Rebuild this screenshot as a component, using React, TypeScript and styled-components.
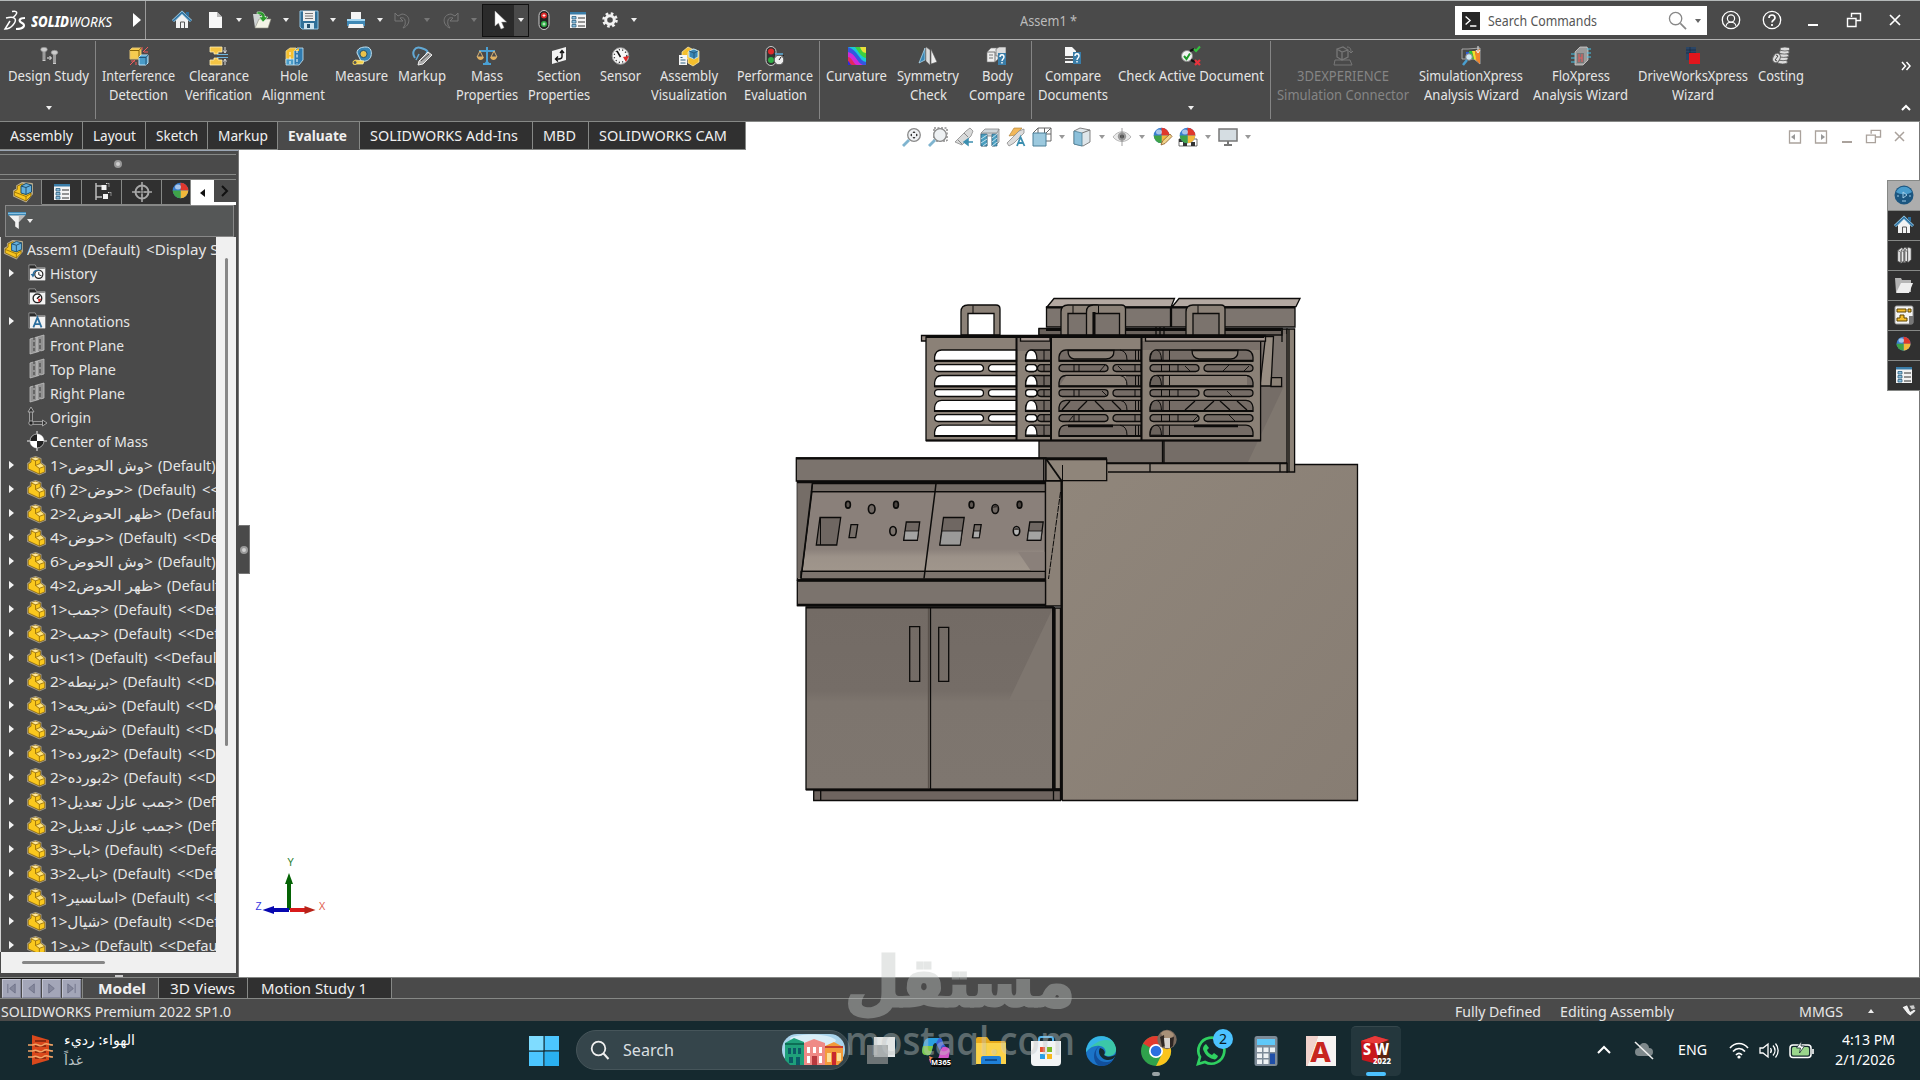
import React, { useLayoutEffect, useRef } from "react";
import styled, { createGlobalStyle } from "styled-components";

const C = {
  bar: "#4a4a4a",
  dark: "#303030",
  line: "#868886",
  text: "#e6e6e6",
  task: "#15292f",
};
const UI = `"Noto Sans", "Open Sans", "DejaVu Sans", sans-serif`;

const Global = createGlobalStyle`
  * { box-sizing: border-box; }
  body { margin: 0; background: #fff; font-family: ${UI}; overflow: hidden; }
  svg { display: block; flex: none; overflow: visible; }
`;

/* ---------- text fitted to a column width ---------- */
const FitBox = styled.span<{ $w: number }>`
  display: inline-block;
  flex: none;
  width: ${(p) => p.$w}px;
  white-space: pre;
  text-align: left;
`;
const FitInner = styled.span`
  display: inline-block;
  transform-origin: 0 50%;
`;
const Fit = ({ w, t }: { w: number; t: string }) => {
  const ref = useRef<HTMLSpanElement>(null);
  useLayoutEffect(() => {
    const el = ref.current!;
    el.style.transform = "none";
    const n = el.getBoundingClientRect().width;
    el.style.transform = `scaleX(${w / n})`;
  }, [w, t]);
  return (
    <FitBox $w={w}>
      <FitInner ref={ref}>{t}</FitInner>
    </FitBox>
  );
};

/* ---------- icons ---------- */
const Svg = ({ s = 20, vb = 20, children }: any) => (
  <svg width={s} height={s} viewBox={`0 0 ${vb} ${vb}`} fill="none">
    {children}
  </svg>
);
const Down = ({ c = "#eee", up = false }: any) => (
  <svg width="6" height="4" viewBox="0 0 6 4">
    <path d={up ? "M0 4h6L3 0z" : "M0 0h6L3 4z"} fill={c} />
  </svg>
);
const Home = () => (
  <Svg>
    <path d="M4 10v8h12v-8l-6-6z" fill="#f2f2f2" />
    <path d="M8.500 18v-6h4v6" stroke="#555" />
    <path d="M1 11l9-8.500L19 11" stroke="#9fd3ef" strokeWidth="3" />
    <path d="M1 11l9-8.500L19 11" stroke="#2d6f9e" strokeWidth="1.600" />
    <path d="M14 2h3v5l-3-3z" fill="#2d6f9e" />
  </Svg>
);
const NewDoc = () => (
  <Svg>
    <path d="M4 2h8l5 5v11H4z" fill="#f7f7f7" />
    <path d="M12 2v5h5z" fill="#b9b9b9" />
  </Svg>
);
const Open = () => (
  <Svg>
    <path d="M1 4h6l1 2h6v12H3z" fill="#cfd3d3" />
    <path d="M3 18l4-9h12l-3 9z" fill="#f3f3e6" stroke="#8d8d80" strokeWidth=".6" />
    <path d="M5 2c5-1 8 1 8 5h3l-5 5-4-5h3c0-2-2-3-5-3z" fill="#2c9a2c" stroke="#e6ffe6" strokeWidth=".5" />
  </Svg>
);
const Save = () => (
  <Svg>
    <path d="M1 1h18v18H3l-2-2z" fill="#2f6f98" stroke="#8ec4e4" />
    <path d="M4 1h12v10H4z" fill="#eee" />
    <path d="M6 3.500h8M6 6h8M6 8.500h8" stroke="#777" />
    <path d="M5 13h10v6H5z" fill="#cfe4f0" />
    <path d="M8 14h3v4H8z" fill="#24506e" />
  </Svg>
);
const Print = () => (
  <Svg>
    <path d="M5 2h10v7H5z" fill="#f4f4f4" />
    <path d="M1 9h18v7H1z" fill="#3f88b5" />
    <path d="M1 9h18v2H1z" fill="#a6d6f0" />
    <path d="M3 14h14l1 4H2z" fill="#f4f4f4" />
  </Svg>
);
const Undo = () => (
  <Svg>
    <path d="M2 3v8h8L7 8c4-1 6 1 5 7l-2 3c7-2 9-13-1-14L5 6z" stroke="#777" />
  </Svg>
);
const Redo = () => (
  <Svg>
    <path d="M18 3v8h-8l3-3c-4-1-6 1-5 7l2 3C3 16 1 5 11 4l4 2z" stroke="#777" />
  </Svg>
);
const Cursor = () => (
  <Svg>
    <path d="M6 1v15l3.500-3 2.500 6 3-1.300-2.500-5.700h5z" fill="#fff" stroke="#aaa" strokeWidth=".5" />
  </Svg>
);
const Traffic = () => (
  <Svg>
    <rect x="5" y="0.500" width="10" height="19" rx="5" fill="#222" stroke="#ccc" />
    <circle cx="10" cy="5.500" r="3" fill="#e02a2a" />
    <circle cx="10" cy="14" r="3" fill="#2fae45" />
    <path d="M8.500 5.500h3M8.500 14h3M10 4v3M10 12.500v3" stroke="#fff" strokeWidth=".8" />
  </Svg>
);
const ListIco = () => (
  <Svg>
    <path d="M2 2h16v16H2z" fill="#f4f4f4" />
    <path d="M2 2h16v2.500H2z" fill="#3a7da8" />
    <path d="M4 6.500h4v2.500H4zM4 10.500h4V13H4zM4 14.500h4V17H4z" fill="#8cc0de" stroke="#2d6080" strokeWidth=".8" />
    <path d="M10 8h7M10 12h7M10 16h7" stroke="#333" strokeWidth="1.200" />
  </Svg>
);
const Gear = () => (
  <Svg>
    <circle cx="10" cy="10" r="6.500" stroke="#f2f2f2" strokeWidth="2.500" strokeDasharray="2.600 2.500" />
    <circle cx="10" cy="10" r="4.300" stroke="#f2f2f2" strokeWidth="3" />
  </Svg>
);
const Bolt = ({ x, h }: any) => (
  <g transform={`translate(${x} ${h})`}>
    <ellipse cx="3.500" cy="2.500" rx="3.300" ry="2.200" fill="#ccc" stroke="#888" strokeWidth=".6" />
    <path d="M2 4.500h3V14H2z" fill="#ccc" />
    <path d="M1.500 6h4M1.500 8h4M1.500 10h4M1.500 12h4" stroke="#555" strokeWidth=".8" />
  </g>
);
const Study = () => (
  <Svg>
    <Bolt x={1.5} h={1} />
    <Bolt x={12} h={4} />
    <path d="M8 12h4M10.500 10l2 2-2 2" stroke="#eee" />
  </Svg>
);
const Interf = () => (
  <Svg>
    <path d="M1 4l2-2h9v9l-2 2H1z" fill="#f6cc50" stroke="#e0c070" />
    <path d="M1 4.500h9V13M10 4.500l2-2.500" stroke="#7d5a00" strokeWidth=".9" />
    <path d="M10 11l2-2h7v8l-2 2h-7z" fill="#4a9cc8" stroke="#bfe4f7" />
    <path d="M10 11.500h7V19M17 11.500L19 9" stroke="#1f4f70" strokeWidth=".9" />
    <path d="M14 6l5-5M13 4V1M19 6h-4M1 19l5-5M2 15h4M7 19v-3" stroke="#f05a5a" />
  </Svg>
);
const Clear = () => (
  <Svg>
    <path d="M1 1h12v5H9v2H5V6H1zM1 19h12v-5H9v-2H5v2H1z" fill="#f5c545" stroke="#fff0b8" strokeWidth=".8" />
    <path d="M8 8.500h11M8 11.500h11" stroke="#6fb4dd" />
    <path d="M16 1v5M14.500 4.500L16 7l1.500-2.500M16 19v-5M14.500 15.500L16 13l1.500 2.500" stroke="#ddd" />
  </Svg>
);
const Hole = () => (
  <Svg>
    <path d="M2 5l4-3h6v15H2z" fill="#f5bf2d" stroke="#e8d9a0" strokeWidth=".8" />
    <path d="M2 13h8v6H2z" fill="#4a9cc8" stroke="#c9e8f8" strokeWidth=".8" />
    <path d="M10 5l3-3h6v12l-4 5h-5z" fill="#2f7bb0" stroke="#c9e8f8" strokeWidth=".8" />
    <path d="M10 5h5V2" fill="#f5bf2d" />
    <path d="M6 6v13M13 4v14" stroke="#fff" strokeDasharray="3 1.500" />
  </Svg>
);
const Measure = () => (
  <Svg>
    <path d="M5 7c0-5 5-6 9-6 5 0 6 5 5 9s-5 6-10 5z" fill="#3a86b4" stroke="#c2e2f2" />
    <circle cx="11.500" cy="8" r="3.600" fill="#e9c24a" stroke="#23516e" />
    <path d="M1 18l2-4 9 1-1 3z" fill="#f5d04a" stroke="#fff3b8" strokeWidth=".7" />
    <circle cx="3" cy="16.500" r="2" fill="#555" stroke="#f5d04a" />
  </Svg>
);
const MarkupI = () => (
  <Svg>
    <path d="M3 12C-1 6 3 0 9 2s8 3 5 6" stroke="#62a9d5" strokeWidth="2" />
    <path d="M4 14l3-6" stroke="#62a9d5" strokeWidth="1.500" />
    <path d="M7 15L16 6l4 3-9 9-5 1z" fill="#aaa" stroke="#eee" />
    <path d="M9 15l8-7" stroke="#444" />
  </Svg>
);
const Mass = () => (
  <Svg>
    <path d="M10 1v16M2 5h16M6 18h8" stroke="#4aa0d4" strokeWidth="2" />
    <path d="M0 11l3-6 3 6zM14 11l3-6 3 6z" stroke="#e9c07a" strokeWidth=".9" />
    <path d="M0 11h7c-1 4-6 4-7 0zM13 11h7c-1 4-6 4-7 0z" fill="#e0b060" />
    <path d="M7 18h6l-3-4z" fill="#4aa0d4" />
  </Svg>
);
const Section = () => (
  <Svg>
    <path d="M3 5l14-4v13L3 18z" fill="#f3f3f3" />
    <path d="M13 5v6c0 2-2 2-6 2M9 10.500L6.500 13 9 15.500M11 7l2-2.500L15 7" stroke="#111" strokeWidth="1.400" />
  </Svg>
);
const Sensor = () => (
  <Svg>
    <circle cx="9.500" cy="10" r="8.300" fill="#f6f6f6" stroke="#999" />
    <circle cx="9.500" cy="10" r="6.300" stroke="#333" strokeDasharray="1.200 2.200" strokeWidth="1.300" />
    <path d="M9.500 11L6 5" stroke="#111" strokeWidth="1.500" />
    <path d="M12 11l6-1-3 6z" fill="#e02a2a" />
  </Svg>
);
const AsmVis = () => (
  <Svg>
    <path d="M3 6l6-5 6 3v9H3z" fill="#f5bf2d" stroke="#fff0b8" strokeWidth=".7" />
    <path d="M9 6l5-3 6 2v11l-6 4-5-3z" fill="#f5bf2d" stroke="#fff0b8" strokeWidth=".7" />
    <path d="M10 5l5-2 4 2v6l-4 2-5-2z" fill="#3a86b4" stroke="#bfe4f7" />
    <path d="M10 5l5 2 4-2M15 7v6" stroke="#1f4f70" strokeWidth=".8" />
    <path d="M0 9h8v10H0z" fill="#f6f6f6" />
    <path d="M1.500 11.500h2M1.500 14h5M1.500 17h5" stroke="#2d6080" />
  </Svg>
);
const Perf = () => (
  <Svg>
    <rect x="1" y="0.500" width="10" height="19" rx="5" fill="#333" stroke="#ccc" />
    <circle cx="6" cy="5.500" r="3" fill="#e02a2a" />
    <circle cx="6" cy="14" r="3" fill="#2fae45" />
    <circle cx="14" cy="14" r="4.800" fill="#eee" stroke="#555" />
    <path d="M14 14l2-3M9 9l3-1M17 8l2 2" stroke="#222" />
    <path d="M10 8h8" stroke="#5fb1de" strokeWidth="1.500" />
  </Svg>
);
const Curv = () => (
  <Svg>
    <path d="M1 1h18v18H1z" fill="#19c7d8" />
    <path d="M8 1h11v11C14 11 11 5 8 1z" fill="#3fcf3f" />
    <path d="M13 1h6v6c-3 0-5-3-6-6z" fill="#e9e13a" />
    <path d="M1 1v18h18v-3C12 15 11 4 1 1z" fill="#3357e0" />
    <path d="M1 6v13h15C10 17 9 8 1 6z" fill="#d02ad8" />
    <path d="M1 11v8h9c-4-1-4-7-9-8z" fill="#e02a5a" />
    <path d="M1 15v4h4c-2 0-2-3-4-4z" fill="#2b2be0" />
  </Svg>
);
const Symm = () => (
  <Svg>
    <path d="M1 17L7 2v12z" fill="#3a86b4" stroke="#bfe4f7" strokeWidth=".7" />
    <path d="M8 1l4 3v15l-4-4z" fill="#ddd" stroke="#777" strokeWidth=".5" />
    <path d="M13 3l6 13-6 2z" fill="#eee" stroke="#555" strokeWidth=".6" />
  </Svg>
);
const Q = ({ x = 11, y = 7 }: any) => (
  <g transform={`translate(${x} ${y})`}>
    <path d="M0 0h8v12H0z" fill="#3a7da8" />
    <path d="M2 4c0-3 4-3 4 0 0 2-2 2-2 4M4 9v1.500" stroke="#fff" strokeWidth="1.400" />
  </g>
);
const Body = () => (
  <Svg>
    <path d="M0 6l4-4h7v11l-3 3H0z" fill="#eee" stroke="#777" strokeWidth=".6" />
    <path d="M9 3l3-2h7v9H9z" fill="#ddd" stroke="#555" strokeWidth=".6" />
    <path d="M0 6h8v10M2 9h4M2 12h4" stroke="#555" strokeWidth=".8" />
    <Q />
  </Svg>
);
const CompDoc = () => (
  <Svg>
    <path d="M2 1h7l4 4v12H2z" fill="#f6f6f6" />
    <path d="M2 11h9M2 14h9" stroke="#222" strokeWidth="1.500" />
    <Q x={10} y={6} />
  </Svg>
);
const CheckI = () => (
  <Svg>
    <circle cx="6" cy="10" r="5.500" fill="#f2f2f2" stroke="#888" />
    <path d="M3 10l2.500 3L9 7.500" stroke="#1f9a2a" strokeWidth="2" />
    <path d="M9 5l4-2M10 14l4 2" stroke="#111" strokeWidth="2" />
    <path d="M13 3l2 2 4-4.500" stroke="#35c23f" strokeWidth="2" />
    <path d="M14 14l5 5M19 14l-5 5" stroke="#e8323c" strokeWidth="2.200" />
  </Svg>
);
const Exp3d = () => (
  <Svg>
    <path d="M2 14h15l2 5H1z" stroke="#777" />
    <path d="M4 3l6-2 5 3v7l-6 3-5-3zM9 6v8M4 3l5 3 6-2" stroke="#777" strokeWidth="1.300" />
    <path d="M14 1c4 0 4 3 4 6l2-2M18 7l-2-2" stroke="#777" />
  </Svg>
);
const SimX = () => (
  <Svg>
    <path d="M1 3h6l12-1v16l-6-5H1z" fill="#4a4a4a" stroke="#ccc" strokeWidth=".7" />
    <path d="M5 6h4v8H5z" fill="#2c5ee0" />
    <path d="M8 5h3l2 8h-4z" fill="#2cc53c" />
    <path d="M11 5h3l2 10-3-2z" fill="#f2e02c" />
    <path d="M14 5l5-2v15l-4-4z" fill="#f0832c" />
    <path d="M17 0v6M15 4l2 3 2-3" stroke="#eee" />
    <circle cx="8" cy="11" r="3.300" fill="#cfe6f4" stroke="#888" />
    <path d="M6 14l-4 5" stroke="#4a9fd0" strokeWidth="2.500" />
  </Svg>
);
const FloX = () => (
  <Svg>
    <path d="M4 6l5-5h7l1 2v11l-5 5H4z" fill="#9a9a9a" stroke="#ddd" strokeWidth=".7" />
    <path d="M6 7h7v10H6z" fill="#777" />
    <path d="M8 8v8M8 12h3M11 8v8" stroke="#f05a5a" />
    <path d="M0 8h4M0 12h4M0 16h4M16 3h4M16 7h4M16 11h4" stroke="#44c4e8" strokeWidth="1.200" />
  </Svg>
);
const Drive = () => (
  <Svg>
    <path d="M3 1h10v13H3z" fill="#2b4666" />
    <path d="M3 4h10M3 7h10M7 1v13" stroke="#14243a" strokeWidth=".6" />
    <path d="M6 7h11v11H6z" fill="#e3161c" />
  </Svg>
);
const Cost = () => (
  <Svg>
    {[16, 12.700, 9.400, 6.100, 3].map((y, i) => (
      <ellipse key={y} cx={11.5 + i * 0.6} cy={y} rx="5" ry="2" fill="#ddd" stroke="#555" strokeWidth=".8" />
    ))}
    <ellipse cx="5.500" cy="12" rx="3.500" ry="5" fill="#ddd" stroke="#666" transform="rotate(25 5.500 12)" />
    <path d="M5 9l2 1-3 4 2 1" stroke="#444" />
  </Svg>
);
const Lens = ({ area = false }: any) => (
  <Svg>
    {area && <path d="M6 1h13v13H6z" stroke="#555" strokeDasharray="2 1.500" />}
    <circle cx="12" cy="8" r="6.300" fill="#eef1f3" stroke="#8a8a8a" strokeWidth="1.300" />
    <path d="M7 13l-6 6" stroke="#7fb4cf" strokeWidth="2.800" />
    {!area && <path d="M12 4l-1.500 2h3zM12 12l-1.500-2h3zM8 8l2-1.500v3zM16 8l-2-1.500v3z" fill="#333" />}
  </Svg>
);
const Prev = () => (
  <Svg>
    <path d="M1 15L12 4l4-3 3 3-2 5-9 9z" fill="#d9dada" stroke="#8a8a8a" strokeWidth=".8" />
    <path d="M4 13l4 4M10 6l4 4" stroke="#888" />
    <path d="M19 15h-7M14 12l-4 3 4 3z" stroke="#3c8fb0" fill="#3c8fb0" strokeWidth="1.500" />
  </Svg>
);
const SecView = () => (
  <Svg>
    <path d="M1 6l4-4h14v13l-4 4h-3V9H7v10H1z" fill="#cfd6da" stroke="#888" strokeWidth=".8" />
    <path d="M1 7h6v12H1zM12 7h5v12h-5z" fill="#4a9fc0" stroke="#2d6080" strokeWidth=".7" />
    <path d="M1 12l6-4M1 16l6-4M3 19l4-3M12 11l5-4M12 15l5-4M12 19l5-4" stroke="#e4f3fa" strokeWidth=".8" />
    <path d="M1 6h16l2-4" stroke="#888" strokeWidth=".8" />
  </Svg>
);
const DynAnn = () => (
  <Svg>
    <path d="M3 9L8 1h8l-6 7z" fill="#f2b85a" stroke="#a87a30" strokeWidth=".6" />
    <path d="M1 16L13 4l5-2v4l-10 10-5 3z" fill="#dcdcdc" stroke="#8a8a8a" strokeWidth=".8" />
    <path d="M11 19l3.500-9 4 9M12.500 16h5" stroke="#3c8fb0" strokeWidth="1.800" />
  </Svg>
);
const Cube = ({ wire = false }: any) => (
  <Svg>
    {wire ? (
      <>
        <path d="M6 1h13v13H6zM12.500 1v13M6 7h13M19 1l-5 5M6 1L1 6" stroke="#666" />
        <path d="M1 6h13v13H1z" fill="#9cc9de" stroke="#4a7f98" />
      </>
    ) : (
      <>
        <path d="M2 4l6-3 10 2v12l-7 4-9-2z" fill="#dfe6ea" stroke="#777" strokeWidth=".9" />
        <path d="M2 4l8 2v13l-8-2z" fill="#8cc0da" stroke="#4a7f98" strokeWidth=".8" />
        <path d="M10 6l8-3" stroke="#777" />
      </>
    )}
  </Svg>
);
const Eye = () => (
  <Svg>
    <path d="M1 10c5-7 13-7 18 0-5 6-13 6-18 0z" fill="#e9e9e9" stroke="#b8b8b8" />
    <circle cx="10" cy="9.500" r="4.200" fill="#999" />
    <circle cx="10" cy="9.500" r="2" fill="#444" />
    <path d="M10 1v18" stroke="#888" strokeWidth=".8" />
  </Svg>
);
const Ball = ({ s = 20, pen = false, floor = false }: any) => (
  <Svg s={s}>
    {floor && (
      <>
        <path d="M1 12h18v7H1z" fill="#fff" stroke="#333" strokeWidth=".7" />
        <path d="M1 12h4v3H1zM9 12h4v3H9zM5 15h4v4H5zM13 15h4v4h-4z" fill="#333" />
      </>
    )}
    <circle cx="9.500" cy="8.500" r="7.800" fill="#3a7fd0" />
    <path d="M9.500 8.500V.7a7.800 7.800 0 0 1 7.800 7.800z" fill="#e0372c" />
    <path d="M9.500 8.500h7.800a7.800 7.800 0 0 1-7.800 7.800z" fill="#f2b93a" />
    <path d="M9.500 8.500v7.800a7.800 7.800 0 0 1-7.800-7.800z" fill="#3fa348" />
    <ellipse cx="7" cy="5" rx="3" ry="2.500" fill="#fff" opacity=".55" />
    {pen && <path d="M9 18l1.500-4L18 7l2 2.500-7 7z" fill="#f2d38a" stroke="#8a5a2a" strokeWidth=".8" />}
  </Svg>
);
const Monitor = () => (
  <Svg>
    <path d="M1 2h18v12H1z" fill="#d5dde2" stroke="#777" strokeWidth="1.500" />
    <path d="M10 14v4M6 18h8" stroke="#777" strokeWidth="2" />
  </Svg>
);
const Asm = ({ s = 19 }: any) => (
  <Svg s={s}>
    <path d="M1 9l3-2V4l5-3 10 1v10l-6 7.500L1 14z" fill="#bdb090" stroke="#bdb090" strokeWidth="1.800" strokeLinejoin="round" />
    <path d="M1.300 9.500l3-2V4L9 2l3 1v6l6 2v3l-5 5L1.300 13.500z" fill="#f8c620" stroke="#8a6400" strokeWidth=".8" />
    <path d="M8 4l5-2.500L18.500 3v7L13 12.500 8 11z" fill="#63b0de" stroke="#1f4f70" strokeWidth="1" />
    <path d="M8 4l5 1.500L18.500 3M13 5.500v7" stroke="#1f4f70" strokeWidth="1" />
    <path d="M13 19v-4.500L18 11.500M13 14.500L1.500 10" stroke="#8a6400" strokeWidth=".8" />
  </Svg>
);
const Part = () => (
  <Svg s={19}>
    <path d="M.8 8l3-2V2.500L9 .8l5.500 2V7l4.700 3.500V17L13 19.500.8 14z" fill="#a39c8c" stroke="#a39c8c" strokeWidth="1.500" strokeLinejoin="round" />
    <path d="M1.300 8.500l3-2V3L9 1.500 14 3.300V7.500l4.700 3.500v5.700L13 19 1.300 13.500z" fill="#fac81e" stroke="#8a6200" strokeWidth=".8" />
    <path d="M4.300 3L9 5l5-1.700L9 1.500z" fill="#ffe9a0" />
    <path d="M9 10l5-2.300L18.500 11 13 13z" fill="#ffe47e" />
    <path d="M9 5v5l4 3v6M9 10l5-2.300M13 13l5.500-2M4.300 3L9 5l5-1.700" stroke="#8a6200" strokeWidth=".8" />
  </Svg>
);
const Tree = () => (
  <Svg>
    <path d="M4 1v17M4 4h6M4 15h6" stroke="#bbb" strokeWidth="1.500" />
    <path d="M9.500 3h5v5h-5zM11 12h5v5h-5z" fill="#f2f2f2" />
    <path d="M14 1.500h3v3M16 10.500h3v3" stroke="#ddd" strokeDasharray="1.500 1" />
  </Svg>
);
const Target = () => (
  <Svg>
    <circle cx="10" cy="10" r="6.500" stroke="#a8a8a8" strokeWidth="2" />
    <path d="M10 0v20M0 10h20" stroke="#a8a8a8" strokeWidth="1.600" />
    <circle cx="10" cy="10" r="2.300" fill="#333" />
    <path d="M10 6v8M6 10h8" stroke="#a8a8a8" />
  </Svg>
);
const Funnel = () => (
  <Svg s={18}>
    <path d="M0 0h20v4H0z" fill="#3a86b4" />
    <path d="M0 1.500h20" stroke="#9fd3ef" strokeWidth="1" />
    <path d="M1 4h18l-7 7v8l-4-3v-5z" fill="#f2f2f2" />
    <path d="M12 4h7l-7 7z" fill="#bbb" />
  </Svg>
);
const Folder = ({ k }: { k: string }) => (
  <Svg s={18}>
    <path d="M1 1h7l1.500 3H19v14H1z" fill="#2b2b2b" stroke="#999" />
    <path d="M2 5h17v13H2z" fill="#f2f2f2" />
    {k === "a" && <path d="M6 17l4.500-11L15 17M7.500 13.500h6" stroke="#2d6f9e" strokeWidth="2" />}
    {k === "s" && (
      <>
        <circle cx="10.500" cy="11.500" r="4.800" fill="#fff" stroke="#222" strokeWidth="1.500" />
        <path d="M10 12l3-3" stroke="#111" strokeWidth="1.500" />
        <path d="M11 12h4l-3 4z" fill="#e02a2a" />
      </>
    )}
    {k === "h" && (
      <>
        <circle cx="12" cy="11.500" r="4.500" fill="#fff" stroke="#222" strokeWidth="1.300" />
        <path d="M12 9v3l3 1" stroke="#111" />
        <path d="M3 11h5l-2.500 4z" fill="#2d6f9e" />
        <path d="M5.500 12C6 8 9 6 13 7" stroke="#2d6f9e" strokeWidth="1.500" />
      </>
    )}
  </Svg>
);
const Plane = () => (
  <Svg>
    <path d="M3 4l7-2v15l-7 2zM10 2l7-2v15l-7 2z" fill="#929292" stroke="#c0c0c0" strokeWidth=".8" />
    <path d="M7 1v15M13 4v13" stroke="#3a3a3a" strokeDasharray="4 2" />
  </Svg>
);
const Origin = () => (
  <Svg>
    <path d="M4 3v13h13" stroke="#b0b0b0" strokeWidth="3.600" />
    <path d="M4 3v13h13" stroke="#222" strokeWidth="1.500" />
    <path d="M1 5L4 0l3 5zM15.500 13l4.500 3-4.500 3z" fill="#333" stroke="#b0b0b0" strokeWidth=".9" />
    <circle cx="4" cy="16" r="2.200" fill="#222" stroke="#b0b0b0" strokeWidth=".9" />
  </Svg>
);
const CoM = () => (
  <Svg>
    <path d="M10 0v20M0 10h20" stroke="#bbb" strokeWidth="1.500" />
    <circle cx="10" cy="10" r="7" fill="#222" stroke="#aaa" />
    <path d="M10 10V3a7 7 0 0 1 7 7zM10 10v7a7 7 0 0 1-7-7z" fill="#fff" />
  </Svg>
);

/* ---------- title bar ---------- */
const Page = styled.div`
  width: 1920px;
  height: 1080px;
  display: flex;
  flex-direction: column;
  overflow: hidden;
  background: #fff;
`;
const TitleBar = styled.header`
  height: 40px;
  flex: none;
  display: flex;
  align-items: center;
  background: ${C.bar};
  border-top: 1px solid #b4b8b8;
  border-bottom: 1px solid #b4b4b4;
`;
const Brand = styled.div`
  width: 146px;
  height: 38px;
  display: flex;
  align-items: center;
  padding: 0 5px;
  border-right: 1px solid #9a9a9a;
  color: #fff;
  font-size: 15px;
  font-style: italic;
`;
const BrandName = styled.span`
  display: flex;
  margin: 2px 21px 0 5px;
  b { font-weight: 800; }
`;
const Slot = styled.div<{ $w: number; $bg?: string }>`
  width: ${(p) => p.$w}px;
  height: 100%;
  flex: none;
  display: flex;
  align-items: center;
  justify-content: center;
  background: ${(p) => p.$bg || "transparent"};
`;
const SelectBox = styled.div`
  display: flex;
  width: 47px;
  height: 33px;
  border: 1px solid #111;
`;
const DocTitle = styled.div`
  flex: 1;
  padding: 2px 3px 0 0;
  text-align: center;
  color: #bcbcbc;
  font-size: 14px;
  line-height: 24px;
`;
const SearchBox = styled.div`
  width: 252px;
  height: 29px;
  display: flex;
  align-items: center;
  padding: 1px 6px 0 7px;
  background: #fff;
  color: #555;
  font-size: 14px;
`;
const Terminal = styled.div`
  width: 18px;
  height: 18px;
  margin-right: 8px;
  background: #262626;
`;
const SearchEnd = styled.div`
  margin-left: auto;
  display: flex;
  align-items: center;
  gap: 8px;
`;
const WinButtons = styled.div`
  display: flex;
  height: 100%;
  padding: 0 5px 0 3px;
`;

/* ---------- ribbon ---------- */
const Ribbon = styled.div`
  height: 82px;
  flex: none;
  display: flex;
  padding-left: 8px;
  background: ${C.bar};
  border-bottom: 1px solid ${C.line};
`;
const Tool = styled.div<{ $w: number; $off?: boolean }>`
  width: ${(p) => p.$w}px;
  flex: none;
  display: flex;
  flex-direction: column;
  align-items: center;
  padding-top: 6px;
  margin-right: 10px;
  color: ${(p) => (p.$off ? "#858585" : C.text)};
  font-size: 14px;
  line-height: 19px;
`;
const ToolDrop = styled.div`
  margin-top: auto;
  padding-bottom: 11px;
`;
const Sep = styled.div`
  width: 1px;
  height: 78px;
  margin: 1px 6px 0 -4px;
  flex: none;
  background: #858585;
`;
const RibbonEnd = styled.div`
  margin-left: auto;
  width: 28px;
  display: flex;
  flex-direction: column;
  align-items: center;
  padding-top: 21px;
  gap: 32px;
`;

type T = { w: number; i: React.ReactNode; l: [string, number][]; d?: boolean; off?: boolean } | "|";
const tools: T[] = [
  { w: 81, i: <Study />, l: [["Design Study", 81]], d: true },
  "|",
  { w: 73, i: <Interf />, l: [["Interference", 73], ["Detection", 59]] },
  { w: 67, i: <Clear />, l: [["Clearance", 60], ["Verification", 67]] },
  { w: 63, i: <Hole />, l: [["Hole", 28], ["Alignment", 63]] },
  { w: 53, i: <Measure />, l: [["Measure", 53]] },
  { w: 48, i: <MarkupI />, l: [["Markup", 48]] },
  { w: 62, i: <Mass />, l: [["Mass", 32], ["Properties", 62]] },
  { w: 62, i: <Section />, l: [["Section", 44], ["Properties", 62]] },
  { w: 41, i: <Sensor />, l: [["Sensor", 41]] },
  { w: 76, i: <AsmVis />, l: [["Assembly", 58], ["Visualization", 76]] },
  { w: 76, i: <Perf />, l: [["Performance", 76], ["Evaluation", 63]] },
  "|",
  { w: 61, i: <Curv />, l: [["Curvature", 61]] },
  { w: 62, i: <Symm />, l: [["Symmetry", 62], ["Check", 37]] },
  { w: 56, i: <Body />, l: [["Body", 31], ["Compare", 56]] },
  "|",
  { w: 70, i: <CompDoc />, l: [["Compare", 56], ["Documents", 70]] },
  { w: 146, i: <CheckI />, l: [["Check Active Document", 146]], d: true },
  "|",
  { w: 132, i: <Exp3d />, l: [["3DEXPERIENCE", 92], ["Simulation Connector", 132]], off: true },
  { w: 104, i: <SimX />, l: [["SimulationXpress", 104], ["Analysis Wizard", 95]] },
  { w: 95, i: <FloX />, l: [["FloXpress", 58], ["Analysis Wizard", 95]] },
  { w: 110, i: <Drive />, l: [["DriveWorksXpress", 110], ["Wizard", 42]] },
  { w: 46, i: <Cost />, l: [["Costing", 46]] },
];

/* ---------- tab strip ---------- */
const TabRow = styled.div`
  height: 28px;
  flex: none;
  display: flex;
  background: #fff;
  border-right: 1px solid #777;
`;
const Tab = styled.div<{ $w: number; $on?: boolean }>`
  width: ${(p) => p.$w}px;
  flex: none;
  height: 28px;
  display: flex;
  padding-left: 10px;
  line-height: 26px;
  font-size: 15px;
  font-weight: ${(p) => (p.$on ? 700 : 400)};
  color: #f0f0f0;
  background: ${(p) => (p.$on ? C.bar : C.dark)};
  border-right: 1px solid ${C.line};
  border-bottom: 1px solid ${(p) => (p.$on ? C.bar : C.line)};
`;
const tabs: [string, number, number][] = [
  ["Assembly", 83, 63],
  ["Layout", 63, 43],
  ["Sketch", 62, 42],
  ["Markup", 70, 50],
  ["Evaluate", 82, 59],
  ["SOLIDWORKS Add-Ins", 173, 148],
  ["MBD", 56, 33],
  ["SOLIDWORKS CAM", 157, 128],
];
const Hud = styled.div`
  display: flex;
  margin-left: 153px;
  height: 28px;
  padding-top: 1px;
`;
const DocCtl = styled.div`
  display: flex;
  height: 28px;
  margin-left: auto;
  padding: 1px 7px 0 0;
`;

/* ---------- work area ---------- */
const Work = styled.div`
  position: relative;
  height: 828px;
  flex: none;
  display: flex;
`;
const Side = styled.aside`
  width: 239px;
  flex: none;
  display: flex;
  flex-direction: column;
  background: ${C.bar};
  border-top: 1px solid #9aa5b4;
  border-right: 1px solid #777;
`;
const Grip = styled.div`
  height: 21px;
  margin: 3px 2px 4px 0;
  padding-bottom: 2px;
  display: flex;
  align-items: center;
  justify-content: center;
  border: solid ${C.line};
  border-width: 1px 0;
  flex: none;
`;
const Dot = styled.i`
  width: 8px;
  height: 8px;
  border-radius: 50%;
  background: #d0d0d0;
  border: 2px solid #999;
`;
const SideTabs = styled.div`
  height: 26px;
  flex: none;
  display: flex;
  margin-right: 2px;
  border-top: 1px solid ${C.line};
`;
const SideTab = styled.div<{ $w: number; $on?: boolean }>`
  width: ${(p) => p.$w}px;
  flex: none;
  display: flex;
  align-items: center;
  justify-content: center;
  padding-left: ${(p) => (p.$on ? 4 : 0)}px;
  overflow: hidden;
  background: ${(p) => (p.$on ? C.bar : C.dark)};
  border-right: 1px solid ${C.line};
  border-bottom: 1px solid ${(p) => (p.$on ? C.bar : C.line)};
`;
const Scroller = styled.div<{ $light?: boolean }>`
  width: ${(p) => (p.$light ? 23 : 22)}px;
  display: flex;
  align-items: center;
  justify-content: center;
  background: ${(p) => (p.$light ? "#fff" : C.bar)};
  border-bottom: ${(p) => (p.$light ? 0 : 3)}px solid #fff;
`;
const Filter = styled.div`
  height: 32px;
  flex: none;
  margin: 0 4px 0 5px;
  display: flex;
  align-items: center;
  gap: 1px;
  padding-left: 2px;
  background: #555757;
  border: 1px solid #888;
`;
const TreeWrap = styled.div`
  flex: 1;
  display: flex;
  min-height: 0;
  margin-right: 2px;
  border-left: 1px solid #d0d0d0;
`;
const TreeList = styled.div`
  width: 215px;
  overflow: hidden;
`;
const Row = styled.div<{ $root?: boolean }>`
  height: 24px;
  display: flex;
  align-items: center;
  padding-left: ${(p) => (p.$root ? 3 : 8)}px;
  font-size: 14.500px;
  line-height: 24px;
  color: #e6e6e6;
  direction: ltr;
`;
const Expand = styled.span`
  width: 18px;
  flex: none;
`;
const IconCell = styled.span`
  width: 19px;
  flex: none;
  margin-right: 4px;
  display: flex;
  justify-content: center;
`;
const Space = styled.i<{ $w: number }>`
  width: ${(p) => p.$w}px;
  flex: none;
`;
const VScroll = styled.div`
  flex: 1;
  background: #f0f0f0;
  padding: 21px 0 0 9px;
`;
const VThumb = styled.div`
  width: 3px;
  height: 488px;
  border-radius: 2px;
  background: #868686;
`;
const HScroll = styled.div`
  height: 21px;
  flex: none;
  margin: 0 2px 0 1px;
  padding: 9px 0 0 21px;
  background: #f0f0f0;
`;
const HThumb = styled.div`
  width: 83px;
  height: 3px;
  border-radius: 2px;
  background: #868686;
`;
const SideFoot = styled.div`
  height: 5px;
  flex: none;
  border-bottom: 1px solid ${C.line};
  display: flex;
  justify-content: center;
  align-items: flex-end;
  i { width: 8px; height: 2px; background: #ccc; }
`;
const Canvas = styled.main`
  flex: 1;
  background: #fff;
  border-right: 1px solid #777;
  border-bottom: 1px solid ${C.line};
`;
const Splitter = styled.div`
  position: absolute;
  left: 238px;
  top: 375px;
  width: 12px;
  height: 49px;
  display: flex;
  align-items: center;
  justify-content: center;
  background: ${C.bar};
  border: 1px solid #777;
  border-left: 0;
`;
const TaskPane = styled.div`
  position: absolute;
  right: 0;
  top: 30px;
  width: 33px;
  border: solid ${C.line};
  border-width: 1px 0 0 1px;
`;
const PaneBtn = styled.div<{ $on?: boolean }>`
  height: 30px;
  display: flex;
  align-items: center;
  justify-content: center;
  padding-bottom: 1px;
  background: ${(p) => (p.$on ? "#adadad" : C.dark)};
  border-bottom: 1px solid ${C.line};
`;

type R = { i: React.ReactNode; t: string; w: number; e?: boolean; p?: boolean };
const part = (t: string, w: number): R => ({ i: <Part />, t, w, e: true, p: true });
const rows: R[] = [
  { i: <Folder k="h" />, t: "History", w: 47, e: true },
  { i: <Folder k="s" />, t: "Sensors", w: 50 },
  { i: <Folder k="a" />, t: "Annotations", w: 80, e: true },
  { i: <Plane />, t: "Front Plane", w: 74 },
  { i: <Plane />, t: "Top Plane", w: 66 },
  { i: <Plane />, t: "Right Plane", w: 75 },
  { i: <Origin />, t: "Origin", w: 41 },
  { i: <CoM />, t: "Center of Mass", w: 98 },
  part("وش الحوض<1>", 103),
  part("(f) حوض<2>", 83),
  part("ظهر الحوض2<2>", 112),
  part("حوض<4>", 64),
  part("وش الحوض<6>", 103),
  part("ظهر الحوض2<4>", 112),
  part("جمب<1>", 59),
  part("جمب<2>", 59),
  part("u<1>", 35),
  part("برنيطه<2>", 68),
  part("شريحه<1>", 67),
  part("شريحه<2>", 67),
  part("\u202B2بورده<1\u202C>", 69),
  part("\u202B2بورده<2\u202C>", 69),
  part("جمب عازل تعديل<1>", 133),
  part("جمب عازل تعديل<2>", 133),
  part("باب<3>", 50),
  part("باب2<3>", 58),
  part("اسانسير<1>", 77),
  part("شيال<1>", 59),
  part("يد<1>", 40),
];

/* ---------- 3D model ---------- */
const bigY = [350, 375.500, 400.300, 425.200];
const smallY = [364.700, 389.700, 414.700];
const slotPath = (x1: number, x2: number, y: number, right: boolean) =>
  `M${x1} ${y + 11}V${y + 7}Q${x1 + 1} ${y} ${x1 + 7} ${y}H${right ? x2 - 7 : x2}` +
  (right ? `Q${x2 - 1} ${y} ${x2} ${y + 7}V${y + 11}` : `V${y + 11}`) +
  "Z";
const pill = (x1: number, x2: number, y: number, right = true) =>
  `M${x1 + 3.400} ${y}H${right ? x2 - 3.400 : x2}` +
  (right ? `a3.400 3.400 0 0 1 0 6.800` : `v6.800`) +
  `H${x1 + 3.400}a3.400 3.400 0 0 1 0 -6.800z`;
const Slots = ({ a, b, m1, m2, right, fill }: any) => (
  <g fill={fill}>
    {bigY.map((y) => (
      <g key={y}>
        <path d={slotPath(a, b, y, right)} />
        <path d={`M${a} ${y + 10.700}H${b}`} strokeWidth="2" />
      </g>
    ))}
    {smallY.map((y) => (
      <g key={y}>
        <path d={pill(a, m1, y)} />
        <path d={pill(m2, b, y, right)} />
      </g>
    ))}
  </g>
);
const Handle = ({ x, fill = "#fff" }: any) => (
  <g>
    <path d={`M${x} 335V312Q${x} 305 ${x + 7} 305H${x + 35}Q${x + 39} 305 ${x + 39} 309V335z`} fill="#8b8177" />
    <path d={`M${x + 7} 335V313.500H${x + 33}V335z`} fill={fill} />
    <path d={`M${x + 12} 305.500V313`} strokeWidth="1" />
  </g>
);
const Controls = ({ x, lit }: { x: number; lit: boolean }) => (
  <g transform={`translate(${x} 0)`}>
    <path d="M820 517.500H840.700L836.700 545H816.300z" fill="#6f6762" />
    {lit ? <path d="M818.500 531H838.500L836.700 545H816.500z" fill="#9b9a99" strokeWidth=".8" /> : <path d="M820.500 518V545" strokeWidth="1" />}
    <path d="M851 524.700H857.700L855.700 537.700H849z" fill="#766e68" />
    {lit && <path d="M850.300 531H856.500L855.700 537.700H849.500z" fill="#aaa" strokeWidth=".8" />}
    <path d="M906.300 522H919.700L917.300 540.300H903.700z" fill="#6f6762" />
    <path d="M905 531H918.500L917.300 540H904z" fill="#a3a3a2" strokeWidth=".8" />
    <ellipse cx="848" cy="504.700" rx="2.400" ry="3.400" fill="#5d5651" strokeWidth="1.600" />
    <ellipse cx="871.700" cy="509" rx="3.300" ry="4.500" fill="#6f6762" strokeWidth="1.600" />
    <ellipse cx="896" cy="504.700" rx="2.400" ry="3.400" fill="#4a4440" strokeWidth="1.600" />
    <ellipse cx="893" cy="531" rx="3.200" ry="4.500" fill={lit ? "#b5b5b5" : "#7b736d"} strokeWidth="1.600" />
    {lit && <path d="M890 530q3-5 6 0z" fill="#4a4440" stroke="none" />}
    {lit && <path d="M869 508q3-5 6-1z" fill="#3a3430" stroke="none" />}
  </g>
);
const Model = () => (
  <svg width="1680" height="826" viewBox="239 150 1680 826">
    <defs>
      <linearGradient id="door" x1="0" y1="0" x2="0" y2="1">
        <stop offset="0" stopColor="#736b65" />
        <stop offset=".46" stopColor="#756d67" />
        <stop offset=".52" stopColor="#7d756e" />
        <stop offset="1" stopColor="#7e766f" />
      </linearGradient>
      <linearGradient id="side" x1="0" y1="0" x2="1" y2="1">
        <stop offset="0" stopColor="#90867b" />
        <stop offset="1" stopColor="#877d73" />
      </linearGradient>
      <linearGradient id="face" x1="0" y1="0" x2="0" y2="1">
        <stop offset="0" stopColor="#8a807a" />
        <stop offset=".72" stopColor="#8a807a" />
        <stop offset=".82" stopColor="#9c9289" />
        <stop offset="1" stopColor="#a0968c" />
      </linearGradient>
    </defs>
    <g stroke="#0c0b0a" strokeWidth="1.300" fill="none">
      {/* large side panel */}
      <path d="M1062 466H1357.500V800.500H1062z" fill="url(#side)" stroke="none" />
      <path d="M1294 464.500H1357.500V800.500H1062V472H1294z" fill="url(#side)" stroke="none" />
      <path d="M1294 464.500H1357.500V800.500H1062" />

      {/* tower */}
      <path d="M1039 329H1287V463H1039z" fill="#756d67" />
      <path d="M1284 386L1248 462H1287V386z" fill="#7f776f" stroke="none" />
      <path d="M1262 334H1287V386H1262z" fill="#7d756f" stroke="none" />
      <path d="M1287 329H1294.600V472H1287z" fill="#8c8277" />
      <path d="M1289 329V472" />
      <path d="M1100 463.500H1287V472H1108" fill="#91877d" />
      <path d="M1150 464V472M1280 464V472" />
      <path d="M1162.500 441V463M1164 441V463" />
      <path d="M1046.500 307H1170.500V327H1046.500zM1171.500 307H1295V327H1171.500z" fill="#7d756f" />
      <path d="M1047 307L1054 298.500H1174.500L1171 307zM1172 307L1179 298.500H1300L1296 306.500z" fill="#b3a8a1" />
      <path d="M1046.500 307.500H1171M1172 307.500H1295" strokeWidth="2" />
      <path d="M1039 328.500H1282V335H1039z" fill="#6b635d" />
      <path d="M1046 330H1281" strokeWidth="2" />
      <path d="M1156 327V335M1160 327V335M1164 327V335M1282 328V342" />
      <path d="M1265.500 336.500H1273.500L1271 386H1260z" fill="#978d82" />
      <path d="M1271.500 377.700H1281.600V386.500H1271z" fill="#8c8277" />

      {/* handles */}
      <Handle x={961} />
      <Handle x={1061} fill="#7b736d" />
      <Handle x={1086.500} fill="#7b736d" />
      <path d="M1094 312V335" strokeWidth="3" />
      <Handle x={1186} fill="#7b736d" />

      {/* baskets */}
      <path d="M921.500 335.500H1265V341H921.500z" fill="#9b8f86" />
      <path d="M926 337H1260.600V440.500H926z" fill="#8b8177" />
      <path d="M1017 337H1051V351H1017zM1142 341H1260V350H1142z" fill="#7a716a" stroke="none" />
      <path d="M1020.500 336.500H1050V341.200H1020.500zM1145.500 336.500H1265.500V341.200H1145.500z" fill="#a3968f" />
      <Slots a={934.600} b={1016.500} m1={983.500} m2={988.500} right={false} fill="#fff" />
      <Slots a={1025.600} b={1051} m1={1037} m2={1037.500} right={false} fill="#6f6761" />
      <g fill="#fff">
        {bigY.map((y) => (
          <path key={y} d={`M1025.600 ${y + 10}Q1026 ${y} 1031 ${y}Q1037 ${y} 1037 ${y + 10}z`} />
        ))}
        {smallY.map((y) => (
          <path key={y} d={pill(1025.600, 1037, y)} />
        ))}
      </g>
      <Slots a={1059} b={1141} m1={1108} m2={1113} right={false} fill="#756c66" />
      <Slots a={1150} b={1253} m1={1199} m2={1204} right fill="#756c66" />
      <g fill="#8a8077">
        <path d="M1068 350.500H1114Q1114 359 1106 359H1074Q1068 358 1068 350.500z" />
        <path d="M1192 350.500H1238Q1238 359 1231 359H1199Q1192 358 1192 350.500z" />
        <path d="M1066 376H1126V385H1060zM1164 376H1247V385H1164z" stroke="none" />
      </g>
      {bigY.map((y) => (
        <g key={y} strokeWidth="1">
          <path d={`M1120 ${y}Q1127 ${y + 1} 1127 ${y + 10}M1135.500 ${y}V${y + 10}M1138.500 ${y}V${y + 10}`} />
          <path d={`M1150 ${y + 10}Q1151 ${y} 1156 ${y}Q1161 ${y} 1161.500 ${y + 10}z`} fill="#6b635d" />
          <path d={`M1163 ${y}V${y + 10}M1169.500 ${y}V${y + 10}M1044 ${y}V${y + 10}`} />
        </g>
      ))}
      {smallY.map((y) => (
        <path
          key={y}
          strokeWidth="1"
          d={`M1074 ${y}V${y + 7}M1079 ${y}V${y + 7}M1135 ${y}V${y + 7}M1161.500 ${y}V${y + 7}M1169.500 ${y}V${y + 7}M1178 ${y}V${y + 7}M1044 ${y}V${y + 7}`}
        />
      ))}
      <path d="M1062 410L1070 401M1078 410L1087 401M1095 401L1104 410M1112 401L1121 410M1185 410L1195 401M1204 410L1214 401M1220 401L1230 410M1237 401L1247 410" />
      <path strokeWidth=".9" d="M1069 421l4-5M1100 371l5-6M1185 366l5 5M1223 371l6-6M1244 371l5-5M1227 391l5 5M1229 415l6 6M1193 421l5-5M1102 391l5 5M1118 366l4 4" />
      <path d="M1068 426H1113M1194 426H1238" strokeWidth="2.500" />
      <path d="M926 440.500H1260.600" strokeWidth="1.800" />
      <path d="M1016.500 337V440M1051 337V440M1141.500 337V440" strokeWidth="2" />
      <path d="M926 337H1264" strokeWidth="1.800" />

      {/* counter top */}
      <path d="M796.300 458H1046V481H796.300z" fill="#7b736d" />
      <path d="M1046 459.500H1106.700V480.700H1046z" fill="#8f857a" />
      <path d="M796 458.300H1107" strokeWidth="2.200" />
      <path d="M1043.700 459V481" />

      {/* control panel */}
      <path d="M797.300 482H1045.500V580H797.300z" fill="#877d75" />
      <path d="M797.300 482.500H812L801 578H797.300z" fill="#756d67" stroke="none" />
      <path d="M812 491.700H1045.500V571.300H802z" fill="url(#face)" />
      <path d="M1018 552L1031 571H1045V552z" fill="#8a807a" stroke="none" />
      <path d="M812.500 483.500H1045.500V491.700H811.500z" fill="#736b65" />
      <path d="M801 571.300H1045.500V579H801z" fill="#7d746e" />
      <path d="M812.500 483L801 578M936 483.500L935 492L924 578.500" strokeWidth="1.500" />
      <path d="M797 482H1046" strokeWidth="2.400" />
      <Controls x={0} lit={false} />
      <Controls x={123.500} lit />
      <path d="M1045.500 481H1061.500V606H1045.500z" fill="#8b8177" />
      <path d="M1046.500 459.500L1061.700 481" strokeWidth="1.800" />
      <path d="M1062.500 465V482" strokeWidth="1" />
      <path d="M1060.500 492L1048.500 579" strokeDasharray="6 1" strokeWidth="1" />
      <path d="M797.300 580.500H1045.500V605.500H797.300z" fill="#7b736d" />
      <path d="M797 580.500H1045.500M797 605H1046" strokeWidth="2.600" />

      {/* doors */}
      <path d="M806 607H1053V789.500H806z" fill="url(#door)" />
      <path d="M1052 610L1009 700H1052z" fill="#7e766f" stroke="none" />
      <path d="M928.500 607V789" stroke="#5a524c" />
      <path d="M930.500 607V789" />
      <path d="M909.700 626.700H919.700V681.300H909.700zM938.700 627.300H948.700V681.300H938.700z" />
      <path d="M1055 608H1060.500V789H1055z" fill="#8b8177" />
      <path d="M1053.500 607V790" strokeWidth="3" />
      <path d="M806 607.500H1054M806 789.500H1061" strokeWidth="2" />
      <path d="M813.700 790.500H1060.500V800.500H813.700z" fill="#6e645f" />
      <path d="M820.700 790V800M1053.500 790V800" />
      <path d="M1061.700 480V800.500" strokeWidth="2.400" />
    </g>
    {/* axis triad */}
    <g>
      <path d="M289 910V882" stroke="#056305" strokeWidth="4" />
      <path d="M285 884L289 873L293 884z" fill="#056305" />
      <path d="M290 910H307" stroke="#d81b1b" strokeWidth="4" />
      <path d="M304.500 906L315.500 910L304.500 914z" fill="#b82318" />
      <path d="M289 910H271" stroke="#0707b0" strokeWidth="4" />
      <path d="M274 906L262.500 910L274 914z" fill="#0707b0" />
      <g fontFamily="Liberation Sans, sans-serif" fontSize="10" textAnchor="middle">
        <text x="290.500" y="866" fill="#1d7d2c">Y</text>
        <text x="322" y="910" fill="#e0604f">X</text>
        <text x="258.500" y="910" fill="#3636e0">Z</text>
      </g>
    </g>
  </svg>
);

/* ---------- bottom bars ---------- */
const BottomTabs = styled.div`
  height: 21px;
  flex: none;
  display: flex;
  background: ${C.bar};
  border-bottom: 1px solid ${C.line};
`;
const NavBtns = styled.div`
  width: 83px;
  display: flex;
  padding: 0 1px 0 2px;
  gap: 1px;
  border-right: 1px solid ${C.line};
  border-top: 1px solid #111;
`;
const NavBtn = styled.div`
  flex: 1;
  display: flex;
  align-items: center;
  justify-content: center;
  background: #a3a6b8;
  border: 1px solid #c4c6d4;
  border-right-color: #85889c;
  border-bottom-color: #85889c;
`;
const BTab = styled.div<{ $w: number; $on?: boolean }>`
  width: ${(p) => p.$w}px;
  padding-left: ${(p) => (p.$w === 144 ? 13 : p.$on ? 15 : 11)}px;
  font-size: 15px;
  line-height: 20px;
  font-weight: ${(p) => (p.$on ? 700 : 400)};
  color: #f0f0f0;
  background: ${(p) => (p.$on ? C.bar : C.dark)};
  border-right: 1px solid ${C.line};
`;
const Status = styled.div`
  height: 22px;
  flex: none;
  display: flex;
  align-items: center;
  padding: 2px 4px 0 1px;
  background: ${C.bar};
  color: #e6e6e6;
  font-size: 14.500px;
  line-height: 20px;
`;
const Taskbar = styled.footer`
  height: 59px;
  flex: none;
  display: flex;
  align-items: center;
  background: ${C.task};
  color: #fff;
`;
const Weather = styled.div`
  width: 502px;
  display: flex;
  gap: 11px;
  padding: 0 0 2px 28px;
  align-items: center;
`;
const Stack = styled.div<{ $end?: boolean }>`
  display: flex;
  flex-direction: column;
  align-items: ${(p) => (p.$end ? "flex-end" : "flex-start")};
  font-size: 14px;
  line-height: 20px;
  em { font-style: normal; color: #b9c2c4; line-height: 19px; }
`;
const Pill = styled.div`
  width: 274px;
  height: 40px;
  display: flex;
  align-items: center;
  padding: 0 4px 0 13px;
  margin: 0 3px 2px 17px;
  border-radius: 20px;
  background: #35454b;
  border: 1px solid #46555a;
  color: #dadfe0;
  font-size: 15.500px;
  gap: 13px;
`;
const PillArt = styled.div`
  margin-left: auto;
`;
const TaskApp = styled.div`
  position: relative;
  width: 55px;
  height: 50px;
  flex: none;
  display: flex;
  align-items: center;
  justify-content: center;
`;
const ActiveTile = styled.div`
  width: 50px;
  height: 50px;
  display: flex;
  align-items: center;
  justify-content: center;
  border-radius: 5px;
  background: #24373d;
  border-top: 1px solid #36474c;
`;
const Mark = styled.i<{ $w: number; $c: string }>`
  position: absolute;
  bottom: 0;
  left: calc(50% - ${(p) => p.$w / 2}px);
  width: ${(p) => p.$w}px;
  height: 4px;
  border-radius: 2px;
  background: ${(p) => p.$c};
`;
const Badge = styled.span`
  position: absolute;
  right: 5px;
  top: 3px;
  width: 20px;
  height: 20px;
  border-radius: 50%;
  background: #4cc2ff;
  color: #0a1a20;
  font-size: 14px;
  line-height: 20px;
  text-align: center;
`;
const SmallTag = styled.span`
  position: absolute;
  right: 12px;
  bottom: 9px;
  width: 20px;
  background: #0a0a0a;
  border-radius: 2px;
  color: #fff;
  font-size: 7.500px;
  font-weight: 700;
  line-height: 9px;
  text-align: center;
`;
const SwIcon = styled.div`
  position: relative;
  width: 30px;
  height: 30px;
`;
const SwText = styled.div<{ $year?: boolean }>`
  position: absolute;
  left: ${(p) => (p.$year ? 12 : 2)}px;
  top: ${(p) => (p.$year ? 20 : 5)}px;
  color: #fff;
  font-weight: 800;
  font-size: ${(p) => (p.$year ? 8 : 16)}px;
  line-height: ${(p) => (p.$year ? 9 : 17)}px;
`;
const Cad = styled.div`
  width: 30px;
  height: 30px;
  background: linear-gradient(110deg, #f0d2cc 30%, #f7f4f2 31%);
  color: #c8261f;
  font-size: 29px;
  font-weight: 800;
  line-height: 29px;
  text-align: center;
`;
const Tray = styled.div`
  margin-left: auto;
  display: flex;
  align-items: center;
  padding: 0 25px 2px 0;
  font-size: 14px;
`;
const Watermark = styled.div`
  position: absolute;
  left: 845px;
  top: 944px;
  width: 230px;
  color: #c2c6c5;
  opacity: 0.41;
  pointer-events: none;
`;
const WmArabic = styled.div`
  height: 74px;
  font: 700 68px/78px "DejaVu Sans", sans-serif;
  -webkit-text-stroke: 3px #c2c6c5;
  stroke-linejoin: round;
`;
const WmLatin = styled.div`
  height: 50px;
  font: 600 39px/44px "Open Sans", sans-serif;
`;

const WinLogo = () => (
  <svg width="30" height="30" viewBox="0 0 30 30">
    <path d="M0 0h14.300v14.300H0zM15.700 0H30v14.300H15.700zM0 15.700h14.300V30H0zM15.700 15.700H30V30H15.700z" fill="#4cc6ff" />
    <path d="M0 0h14.300v14.300H0z" fill="#7fdcff" />
    <path d="M15.700 15.700H30V30H15.700z" fill="#2ab0f0" />
  </svg>
);
const Houses = () => (
  <svg width="63" height="31" viewBox="0 0 63 31">
    <rect width="63" height="31" rx="15" fill="#a9d4ec" />
    <path d="M8 4c10-5 38-5 46 2l-4 8H12z" fill="#d9eef8" />
    <path d="M3 9l9-5 10 4v23H8l-5-5z" fill="#1fa07a" />
    <path d="M3 9h19v2H3z" fill="#0d6f56" />
    <path d="M6 14h3v6H6zM11 14h3v6h-3zM16 14h3v6h-3zM7 23h4v6H7zM14 23h4v8h-4z" fill="#0c5a66" />
    <path d="M22 9l10-4 11 4v22H22z" fill="#ef8a86" />
    <path d="M25 13h3v6h-3zM31 13h3v6h-3zM37 13h3v6h-3zM25 22h3v7h-3zM37 22h3v7h-3z" fill="#fff" />
    <path d="M30 22h5v9h-5z" fill="#b83a3f" />
    <path d="M43 12l9-4 9 5v13l-5 5H43z" fill="#f39b3a" />
    <path d="M43 12h18v2H43z" fill="#c8402e" />
    <path d="M45 19h4v9h-4zM55 19h4v8h-4z" fill="#fbe09a" />
    <path d="M50 18h4v13h-4z" fill="#c8282e" />
  </svg>
);

export default function App() {
  return (
    <Page>
      <Global />
      <TitleBar>
        <Brand>
          <svg width="21" height="21" viewBox="0 0 21 21" fill="none" stroke="#fff" strokeWidth="1.500">
            <path d="M7 1.500c5-1 7 1 1 6M1 8c9-2 12 1 7 7-2 2.500-5 4-8 4l5-8" />
            <path d="M20 8c-6 0-7 3-3 5s2 6-6 6" strokeWidth="2.200" />
          </svg>
          <BrandName>
            <b><Fit w={38} t="SOLID" /></b>
            <Fit w={43} t="WORKS" />
          </BrandName>
          <svg width="8" height="14" viewBox="0 0 8 14"><path d="M0 0l8 7-8 7z" fill="#fff" /></svg>
        </Brand>
        <Slot $w={18} />
        <Slot $w={36}><Home /></Slot>
        {[<NewDoc />, <Open />, <Save />, <Print />, <Undo />, <Redo />].map((ic, i) => (
          <React.Fragment key={i}>
            <Slot $w={30}>{ic}</Slot>
            <Slot $w={17}><Down c={i > 3 ? "#777" : "#eee"} /></Slot>
          </React.Fragment>
        ))}
        <SelectBox>
          <Slot $w={31} $bg="#2a2a2a"><Cursor /></Slot>
          <Slot $w={14}><Down /></Slot>
        </SelectBox>
        <Slot $w={30}><Traffic /></Slot>
        <Slot $w={38}><ListIco /></Slot>
        <Slot $w={26}><Gear /></Slot>
        <Slot $w={21}><Down /></Slot>
        <DocTitle><Fit w={57} t="Assem1 *" /></DocTitle>
        <SearchBox>
          <Terminal>
            <Svg s={18}><path d="M4 5l5 4.500L4 14M9 15.500h7" stroke="#fff" strokeWidth="1.500" /></Svg>
          </Terminal>
          <Fit w={109} t="Search Commands" />
          <SearchEnd>
            <Svg s={19}><circle cx="8" cy="8" r="6.500" stroke="#888" strokeWidth="1.400" /><path d="M13 13l6 6" stroke="#888" strokeWidth="1.800" /></Svg>
            <Down c="#666" />
          </SearchEnd>
        </SearchBox>
        <WinButtons>
          <Slot $w={41}>
            <Svg><circle cx="10" cy="10" r="8.700" stroke="#fff" strokeWidth="1.300" /><circle cx="10" cy="8.500" r="3.600" stroke="#fff" strokeWidth="1.200" /><path d="M5 16c1-5 9-5 10 0" stroke="#fff" strokeWidth="1.200" /></Svg>
          </Slot>
          <Slot $w={41}>
            <Svg><circle cx="10" cy="10" r="8.700" stroke="#fff" strokeWidth="1.300" /><path d="M7 8c0-4 6-4 6 0 0 2-3 2-3 4.500M10 14v2" stroke="#fff" strokeWidth="1.700" /></Svg>
          </Slot>
          <Slot $w={41}><Svg><path d="M5 15h10" stroke="#fff" strokeWidth="2" /></Svg></Slot>
          <Slot $w={41}>
            <Svg s={16} vb={16}><path d="M5.500 5V1.500h9v7h-4M1.500 6.500h8.500v8H1.500z" stroke="#fff" strokeWidth="1.400" /></Svg>
          </Slot>
          <Slot $w={41}><Svg s={12} vb={12}><path d="M1 1l10 10M11 1L1 11" stroke="#fff" strokeWidth="1.700" /></Svg></Slot>
        </WinButtons>
      </TitleBar>

      <Ribbon>
        {tools.map((t, k) =>
          t === "|" ? (
            <Sep key={k} />
          ) : (
            <Tool key={k} $w={t.w} $off={t.off}>
              {t.i}
              {t.l.map(([s, w]) => <Fit key={s} w={w} t={s} />)}
              {t.d && <ToolDrop><Down /></ToolDrop>}
            </Tool>
          )
        )}
        <RibbonEnd>
          <Svg s={10} vb={10}><path d="M1 1l3.500 4L1 9M5.500 1L9 5 5.500 9" stroke="#fff" strokeWidth="1.500" /></Svg>
          <Svg s={10} vb={10}><path d="M1 7l4-4 4 4" stroke="#fff" strokeWidth="2" /></Svg>
        </RibbonEnd>
      </Ribbon>

      <TabRow>
        {tabs.map(([s, w, tw], i) => (
          <Tab key={i} $w={w} $on={s === "Evaluate"}><Fit w={tw} t={s} /></Tab>
        ))}
        <Hud>
          <Slot $w={26}><Lens /></Slot>
          <Slot $w={26}><Lens area /></Slot>
          <Slot $w={26}><Prev /></Slot>
          <Slot $w={26}><SecView /></Slot>
          <Slot $w={26}><DynAnn /></Slot>
          <Slot $w={26}><Cube wire /></Slot>
          <Slot $w={14}><Down c="#999" /></Slot>
          <Slot $w={26}><Cube /></Slot>
          <Slot $w={14}><Down c="#999" /></Slot>
          <Slot $w={26}><Eye /></Slot>
          <Slot $w={14}><Down c="#999" /></Slot>
          <Slot $w={26}><Ball pen /></Slot>
          <Slot $w={26}><Ball floor /></Slot>
          <Slot $w={14}><Down c="#999" /></Slot>
          <Slot $w={26}><Monitor /></Slot>
          <Slot $w={14}><Down c="#999" /></Slot>
        </Hud>
        <DocCtl>
          <Slot $w={26}><Svg s={14} vb={14}><path d="M1.500 1h11v12h-11z" stroke="#aaa29c" strokeWidth="1.300" /><path d="M3 7l4-3v6z" fill="#999" /></Svg></Slot>
          <Slot $w={26}><Svg s={14} vb={14}><path d="M1.500 1h11v12h-11z" stroke="#aaa29c" strokeWidth="1.300" /><path d="M11 7L7 4v6z" fill="#999" /></Svg></Slot>
          <Slot $w={26}><Svg s={14} vb={14}><path d="M2 12h10" stroke="#aaa29c" strokeWidth="2" /></Svg></Slot>
          <Slot $w={26}><Svg s={15} vb={16}><path d="M5.500 5V1.500h10v7h-5M.5 6.500H10v8H.5z" stroke="#aaa29c" strokeWidth="1.400" /></Svg></Slot>
          <Slot $w={26}><Svg s={11} vb={11}><path d="M1 1l9 9M10 1l-9 9" stroke="#aaa29c" strokeWidth="1.500" /></Svg></Slot>
        </DocCtl>
      </TabRow>

      <Work>
        <Side>
          <Grip><Dot /></Grip>
          <SideTabs>
            <SideTab $w={42} $on><Asm s={20} /></SideTab>
            <SideTab $w={40}><ListIco /></SideTab>
            <SideTab $w={40}><Tree /></SideTab>
            <SideTab $w={40}><Target /></SideTab>
            <SideTab $w={29}><Space $w={10} /><Ball /></SideTab>
            <Scroller $light><Svg s={8} vb={8}><path d="M6 0v8L1 4z" fill="#111" /></Svg></Scroller>
            <Scroller><Svg s={12} vb={12}><path d="M3 1l5 5-5 5" stroke="#111" strokeWidth="2" /></Svg></Scroller>
          </SideTabs>
          <Filter><Funnel /><Down /></Filter>
          <TreeWrap>
            <TreeList>
              <Row $root>
                <IconCell><Asm /></IconCell>
                <Fit w={113} t="Assem1 (Default)" /><Space $w={6} /><Fit w={78} t="<Display St" />
              </Row>
              {rows.map((r, k) => (
                <Row key={k}>
                  <Expand>
                    {r.e && <svg width="5" height="8" viewBox="0 0 5 8"><path d="M0 0l5 4-5 4z" fill="#f2f2f2" /></svg>}
                  </Expand>
                  <IconCell>{r.i}</IconCell>
                  <Fit w={r.w} t={r.t} />
                  {r.p && (<><Space $w={5} /><Fit w={57.500} t="(Default)" /><Space $w={6} /><Fit w={68} t="<<Default" /></>)}
                </Row>
              ))}
            </TreeList>
            <VScroll><VThumb /></VScroll>
          </TreeWrap>
          <HScroll><HThumb /></HScroll>
          <SideFoot><i /></SideFoot>
        </Side>
        <Canvas><Model /></Canvas>
        <Splitter><Dot /></Splitter>
        <TaskPane>
          <PaneBtn $on>
            <Svg>
              <circle cx="10" cy="10" r="9.500" fill="#1c5680" />
              <path d="M2 7c3-7 13-7 16 0-4 3-12 3-16 0z" fill="#4a9ccc" />
              <path d="M9 7l4 3-4 3zM3 11h2M15 11h2M8 16h4" stroke="#9fcbe6" />
            </Svg>
          </PaneBtn>
          <PaneBtn><Home /></PaneBtn>
          <PaneBtn>
            <Svg s={18}><path d="M3 5l4-3 3 1v14l-3 2-4-2zM7 4.500l4-3 3 1v14l-3 2-4-1zM11 4l4-2.500 3 1V15l-3 3-4-1z" fill="#e8e8e8" stroke="#444" strokeWidth=".8" /><path d="M3 5l3 1.500v13M7 5l3 1.500v12M11 5l3 1v12" stroke="#555" strokeWidth=".8" /></Svg>
          </PaneBtn>
          <PaneBtn>
            <Svg><path d="M1 3h6l1 2h9v12H2z" fill="#b5b5b5" /><path d="M2 18l5-10h12l-4 10z" fill="#eee" /></Svg>
          </PaneBtn>
          <PaneBtn>
            <Svg><rect x="1" y="1" width="18" height="18" rx="1.500" fill="#f4f4f4" stroke="#999" /><path d="M3 4h9v3H3zM14 4h3v3h-3zM3 16v-3h3v-3h4v3h3v3z" fill="#f5bf2d" stroke="#5a4200" /><path d="M15 11h4v8h-4z" fill="#777" /></Svg>
          </PaneBtn>
          <PaneBtn><Ball s={18} /></PaneBtn>
          <PaneBtn><ListIco /></PaneBtn>
        </TaskPane>
      </Work>

      <BottomTabs>
        <NavBtns>
          {["M2 1v10M10 1v10L4 6z", "M9 1v10L3 6z", "M3 1v10l6-5z", "M10 1v10M2 1v10l6-5z"].map((d) => (
            <NavBtn key={d}><Svg s={11} vb={12}><path d={d} fill="#85889c" stroke="#6f7288" /></Svg></NavBtn>
          ))}
        </NavBtns>
        <BTab $w={76} $on><Fit w={48} t="Model" /></BTab>
        <BTab $w={89}><Fit w={65} t="3D Views" /></BTab>
        <BTab $w={144}><Fit w={106} t="Motion Study 1" /></BTab>
      </BottomTabs>
      <Status>
        <Fit w={230} t="SOLIDWORKS Premium 2022 SP1.0" />
        <Space $w={1224} />
        <Fit w={86} t="Fully Defined" />
        <Space $w={19} />
        <Fit w={114} t="Editing Assembly" />
        <Space $w={125} />
        <Fit w={44} t="MMGS" />
        <Space $w={25} />
        <Down up />
        <Space $w={28} />
        <Svg s={15}><path d="M0 4l7 9 4 3 8-7-3-2-5 3-4-9z" fill="#eee" stroke="#333" /><path d="M9 2l7-1 2 5-5 2z" fill="#ccc" stroke="#444" /></Svg>
      </Status>

      <Taskbar>
        <Weather>
          <svg width="25" height="30" viewBox="0 0 25 30" fill="none">
            <path d="M4 0l17 5v20L4 30z" fill="#d9481c" />
            <path d="M7 6h11M7 11h11M7 17h11M7 23h11" stroke="#8f2a10" strokeWidth="2" />
            <path d="M0 10h5c4-3 6 3 10 0s5 0 10 0M0 16h5c4-3 6 3 10 0s5 0 10 0M0 22h5c4-3 6 3 10 0s5 0 10 0" stroke="#f2a366" strokeWidth="1.500" />
          </svg>
          <Stack>
            <Fit w={71} t="الهواء: رديء" />
            <em><Fit w={19} t="غداً" /></em>
          </Stack>
        </Weather>
        <Space $w={27} />
        <WinLogo />
        <Pill>
          <Svg><circle cx="8.500" cy="8.500" r="6.800" stroke="#f0f0f0" strokeWidth="1.800" /><path d="M13.500 13.500l5 5.500" stroke="#f0f0f0" strokeWidth="2" /></Svg>
          <Fit w={51} t="Search" />
          <PillArt><Houses /></PillArt>
        </Pill>
        <TaskApp>
          <Svg s={30} vb={30}><path d="M8 1h21v20H8z" fill="#e3e6e6" /><path d="M1 9h21v19H1z" fill="#6d7476" /><path d="M8 9h14v12H8z" fill="#a9aeaf" /></Svg>
        </TaskApp>
        <TaskApp>
          <Svg s={30} vb={30}>
            <path d="M8 2h10c3 0 3 2 4 5h-7c-3 0-3 3-4 7s-2 6-6 5C0 18 1 14 2 10S4 2 8 2z" fill="#2a9fe0" />
            <path d="M2 10c-1 4-2 9 3 9 4 1 5-1 6-5l1-4z" fill="#7bc943" />
            <path d="M22 28H12c-3 0-3-2-4-5h7c3 0 3-3 4-7s2-6 6-5c5 1 4 5 3 9s-2 8-6 8z" fill="#d457c8" />
            <path d="M8 20l7 3c-1 4 0 5-3 5s-3-4-4-8z" fill="#f2844a" />
            <path d="M18 2c3 0 3 2 4 5l3 4c-4-1-5 1-6 4l-4-8z" fill="#3a5fd8" />
          </Svg>
          <SmallTag>M365</SmallTag>
        </TaskApp>
        <TaskApp>
          <Svg s={30} vb={30}><path d="M0 3q0-2 2-2h9l3 4h14q2 0 2 2v19q0 2-2 2H0z" fill="#e8a91c" /><path d="M0 7h30v21H0z" fill="#fbd24a" /><path d="M5 28v-6q0-2 2-2h16q2 0 2 2v6z" fill="#1f80d8" /><path d="M9 24h12" stroke="#0e4f94" strokeWidth="2" /></Svg>
        </TaskApp>
        <TaskApp>
          <Svg s={30} vb={30}><path d="M8 6V3q0-2 2-2h10q2 0 2 2v3" stroke="#55b5ee" strokeWidth="2" /><path d="M0 5h30v21q0 4-4 4H4q-4 0-4-4z" fill="#f2f4f5" /><path d="M9 11h5v5H9z" fill="#e8502a" /><path d="M16 11h5v5h-5z" fill="#7cba2a" /><path d="M9 18h5v5H9z" fill="#2a9fe8" /><path d="M16 18h5v5h-5z" fill="#f8b81c" /></Svg>
        </TaskApp>
        <TaskApp>
          <Svg s={30} vb={30}>
            <circle cx="15" cy="15" r="15" fill="#1b74c8" />
            <path d="M2 9C6-2 26-4 30 12c1 7-6 10-12 7 3-2 2-8-4-9C9 9 4 11 0 16c0-3 1-5 2-7z" fill="#3bc7a8" />
            <path d="M2 9C6-1 20-2 26 5c-8-3-17 0-26 11 0-3 1-5 2-7z" fill="#35b4e8" />
            <path d="M14 10c-6 3-5 12 1 15 4 2 9 1 12-1-3 5-8 6-12 6C7 29 5 14 14 10z" fill="#114f9c" />
            <path d="M14 12c4 1 6 4 4 7 3 3 9 2 12-1-1 5-5 6-9 6-6-1-10-7-7-12z" fill="#15292f" />
          </Svg>
        </TaskApp>
        <TaskApp>
          <Svg s={30} vb={30}>
            <circle cx="15" cy="15" r="15" fill="#2fa24c" />
            <path d="M15 15L2 7.500A15 15 0 0 1 28 7.500z" fill="#e23a2e" />
            <path d="M15 15L28 7.500A15 15 0 0 1 15 30l6-12z" fill="#fbc41c" />
            <circle cx="15" cy="15" r="7" fill="#fff" />
            <circle cx="15" cy="15" r="5.300" fill="#2b6fe0" />
            <circle cx="26" cy="3.500" r="9.700" fill="#7b6a5e" />
            <path d="M20 -3c4-4 10-3 13 2l-3 4-8-1z" fill="#a89078" />
            <path d="M19 1l4-2 1 11-3 1zM29 2l4-1-1 9-3 2z" fill="#2e2623" />
            <path d="M23 2h6v10h-5z" fill="#d8d4d0" />
          </Svg>
          <Mark $w={8} $c="#9aa3a5" />
        </TaskApp>
        <TaskApp>
          <Svg s={30} vb={30}>
            <path d="M2 28l2-7A13 13 0 1 1 9 26z" stroke="#2fd061" strokeWidth="2.700" />
            <path d="M10 8l3 4-2 2c1 3 3 4 5 5l2-2 4 3c-1 3-3 4-5 3-5-1-9-6-10-10 0-2 1-4 3-5z" fill="#2fd061" />
          </Svg>
          <Badge>2</Badge>
        </TaskApp>
        <TaskApp>
          <Svg s={30} vb={30}><rect x="3.500" width="23" height="30" rx="2.500" fill="#7d8b98" /><path d="M6 3h18v6H6z" fill="#5fc8f8" />
            {[11.500, 17.500, 23.500].map((y) => <path key={y} d={`M6 ${y}h5v4.500H6zM12.500 ${y}h5v4.500h-5z`} fill="#eef2f4" />)}
            <path d="M19 11.500h5V16h-5z" fill="#eef2f4" /><path d="M19 17.500h5V28h-5z" fill="#1f4fa8" />
          </Svg>
        </TaskApp>
        <TaskApp><Cad>A</Cad></TaskApp>
        <TaskApp>
          <ActiveTile>
            <SwIcon>
              <Svg s={30} vb={30}><path d="M0 5L14 0l14 4v17L16 28 1 24z" fill="#c8161c" /><path d="M0 5L14 0l14 4-11 4z" fill="#e83a3a" /><path d="M17 8l11-4v18l-11 6z" fill="#5a2410" /></Svg>
              <SwText><Fit w={26} t="S W" /></SwText>
              <SwText $year><Fit w={18} t="2022" /></SwText>
            </SwIcon>
          </ActiveTile>
          <Mark $w={20} $c="#4cc2ff" />
        </TaskApp>
        <Tray>
          <Svg s={14} vb={14}><path d="M1 10l6-6 6 6" stroke="#fff" strokeWidth="2" /></Svg>
          <Space $w={23} />
          <Svg s={20}><path d="M5 16a4 4 0 0 1 0-8 5 5 0 0 1 10 0 4 4 0 0 1 0 8z" fill="#7e888b" /><path d="M1 2l18 17" stroke="#eee" strokeWidth="1.600" /></Svg>
          <Space $w={24} />
          <Fit w={29} t="ENG" />
          <Space $w={22} />
          <Svg><path d="M1 8c5-6 13-6 18 0M4 11.500c3.500-4 8.500-4 12 0M7 15c2-2.300 4-2.300 6 0" stroke="#fff" strokeWidth="1.700" /><circle cx="10" cy="17" r="1.600" fill="#fff" /></Svg>
          <Space $w={10} />
          <Svg><path d="M1 8h3l5-4v13l-5-4H1z" stroke="#fff" strokeWidth="1.300" /><path d="M11.500 8c1 1.500 1 3.500 0 5M14 5.500c2.500 3 2.500 7 0 10M16.500 3.500c3.500 4 3.500 10 0 14" stroke="#fff" strokeWidth="1.300" /></Svg>
          <Space $w={10} />
          <svg width="25" height="18" viewBox="0 0 25 18" fill="none">
            <rect x="1" y="4" width="21" height="12.500" rx="3" stroke="#fff" strokeWidth="1.500" />
            <rect x="3" y="6" width="17" height="8.500" rx="1.500" fill="#9ad68c" />
            <path d="M24 8v5" stroke="#fff" strokeWidth="1.600" />
            <path d="M12.500 0l-5 7h4l-1 5 5-7h-3.500z" fill="#fff" stroke="#15292f" strokeWidth=".8" />
          </svg>
          <Space $w={21} />
          <Stack $end>
            <Fit w={53} t="4:13 PM" />
            <Fit w={60} t="2/1/2026" />
          </Stack>
        </Tray>
      </Taskbar>
      <Watermark>
        <WmArabic><Fit w={230} t="مستقل" /></WmArabic>
        <WmLatin><Fit w={230} t="mostaql.com" /></WmLatin>
      </Watermark>
    </Page>
  );
}
